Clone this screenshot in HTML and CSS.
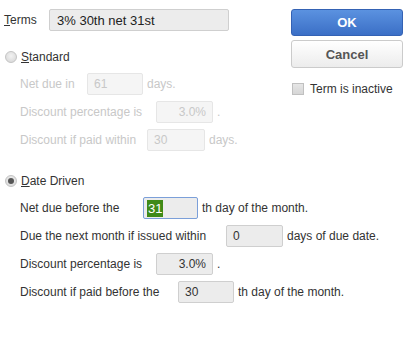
FILE: index.html
```html
<!DOCTYPE html>
<html lang="en">
<head>
    <meta charset="UTF-8">
    <title>Edit Terms</title>
    <link rel="stylesheet" href="styles.css">
</head>
<body>
    <div class="dialog">
        <div class="form">
            <div class="terms-row">
                <label class="terms-label"><u>T</u>erms</label>
                <div class="field terms-field">3% 30th net 31st</div>
            </div>

            <div class="radio-row standard">
                <span class="radio"></span>
                <span><u>S</u>tandard</span>
            </div>
            <div class="rows disabled">
                <div class="row">
                    <span class="lbl w-netdue">Net due in</span>
                    <span class="field f-netdue">61</span>
                    <span class="after">days.</span>
                </div>
                <div class="row">
                    <span class="lbl w-pct">Discount percentage is</span>
                    <span class="field right f-pct">3.0%</span>
                    <span class="after">.</span>
                </div>
                <div class="row">
                    <span class="lbl w-within">Discount if paid within</span>
                    <span class="field f-within">30</span>
                    <span class="after">days.</span>
                </div>
            </div>

            <div class="radio-row driven">
                <span class="radio checked"></span>
                <span><u>D</u>ate Driven</span>
            </div>
            <div class="rows">
                <div class="row">
                    <span class="lbl w-before">Net due before the</span>
                    <span class="field focused f-before"><span class="sel">31</span></span>
                    <span class="after">th day of the month.</span>
                </div>
                <div class="row">
                    <span class="lbl w-issued">Due the next month if issued within</span>
                    <span class="field f-issued">0</span>
                    <span class="after">days of due date.</span>
                </div>
                <div class="row">
                    <span class="lbl w-pct">Discount percentage is</span>
                    <span class="field right f-pct">3.0%</span>
                    <span class="after">.</span>
                </div>
                <div class="row">
                    <span class="lbl w-paid">Discount if paid before the</span>
                    <span class="field f-paid">30</span>
                    <span class="after">th day of the month.</span>
                </div>
            </div>
        </div>

        <div class="side">
            <button class="btn ok">OK</button>
            <button class="btn cancel">Cancel</button>
            <div class="check-row">
                <span class="checkbox"></span>
                <span>Term is inactive</span>
            </div>
        </div>
    </div>
</body>
</html>
```

FILE: styles.css
```css
body {
    margin: 0;
    padding: 0;
    background: #fff;
    font-family: "Liberation Sans", Arial, sans-serif;
    font-size: 12px;
    color: #333;
}

.dialog {
    display: flex;
    padding: 9px 0 0 4px;
}

.form {
    width: 287px;
    flex-shrink: 0;
    white-space: nowrap;
}

.terms-row {
    display: flex;
    align-items: center;
    height: 22px;
}

.terms-label {
    width: 45px;
}

.field {
    box-sizing: border-box;
    flex-shrink: 0;
    height: 22px;
    padding: 0 6px;
    background: #ececec;
    border: 1px solid #cfcfcf;
    border-radius: 2px;
    display: flex;
    align-items: center;
}

.field.right {
    justify-content: flex-end;
}

.terms-field {
    width: 180px;
    font-size: 13px;
    color: #222;
    padding-left: 7px;
}

.radio-row {
    display: flex;
    align-items: center;
    gap: 4px;
    height: 14px;
    padding-left: 1px;
}

.standard {
    margin-top: 19px;
}

.driven {
    margin-top: 23px;
}

.radio {
    box-sizing: border-box;
    width: 12px;
    height: 12px;
    border-radius: 50%;
    border: 1px solid #c4c4c4;
    background: radial-gradient(circle at 50% 40%, #f2f2f2, #d4d4d4);
    position: relative;
}

.radio.checked::after {
    content: '';
    position: absolute;
    left: 2px;
    top: 2px;
    width: 6px;
    height: 6px;
    border-radius: 50%;
    background: #555;
}

.rows {
    display: flex;
    flex-direction: column;
    gap: 6px;
    margin-top: 9px;
    padding-left: 16px;
}

.row {
    display: flex;
    align-items: center;
    height: 22px;
}

.lbl {
    flex-shrink: 0;
}

.after {
    flex-shrink: 0;
    margin-left: 4px;
}

.disabled {
    color: #c8c8c8;
}

.disabled .field {
    background: #f5f5f5;
    border-color: #e6e6e6;
}

.w-netdue { width: 67px; }
.w-pct { width: 136px; }
.w-within { width: 127px; }
.w-before { width: 123px; }
.w-issued { width: 206px; }
.w-paid { width: 158px; }

.f-netdue { width: 56px; }
.f-pct { width: 57px; }
.f-within { width: 58px; }
.f-before { width: 55px; }
.f-issued { width: 57px; }
.f-paid { width: 56px; }

.focused {
    border-color: #7b9fd9;
    padding-left: 3px;
}

.sel {
    background: #3f8a17;
    color: #fff;
    padding: 1px 1px;
    font-size: 13px;
}

.side {
    width: 112px;
    display: flex;
    flex-direction: column;
}

.btn {
    font-family: "Liberation Sans", Arial, sans-serif;
    font-size: 13px;
    font-weight: bold;
    border-radius: 3px;
    cursor: pointer;
}

.ok {
    height: 27px;
    color: #fff;
    background: linear-gradient(to bottom, #5b92e0, #3b6fc6);
    border: 1px solid #3462b4;
}

.cancel {
    height: 28px;
    margin-top: 4px;
    color: #555;
    background: linear-gradient(to bottom, #ffffff, #ececec);
    border: 1px solid #cbcbcb;
}

.check-row {
    display: flex;
    align-items: center;
    gap: 6px;
    margin-top: 14px;
    padding-left: 1px;
    font-size: 12px;
}

.checkbox {
    box-sizing: border-box;
    width: 12px;
    height: 12px;
    border: 1px solid #c0c0c0;
    background: linear-gradient(to bottom, #e6e6e6, #d6d6d6);
}
```
